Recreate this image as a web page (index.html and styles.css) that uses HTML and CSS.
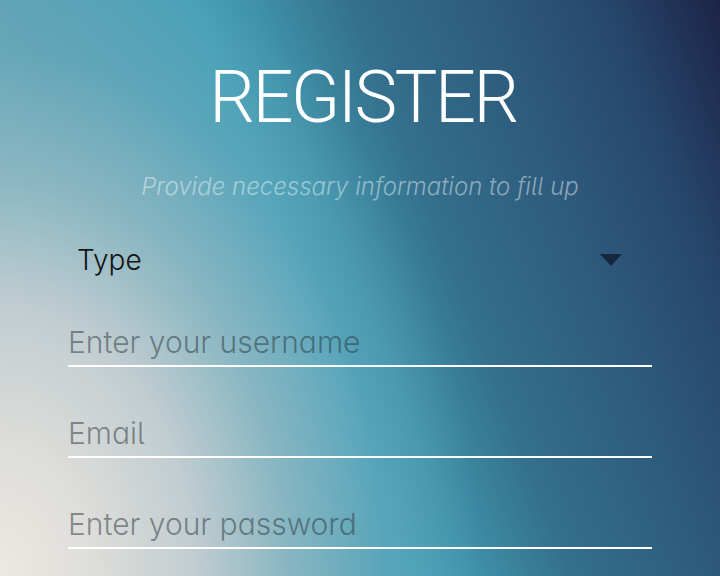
FILE: index.html
```html
<!DOCTYPE html>
<html lang="en">
<head>
<meta charset="utf-8">
<title>Register</title>
<link rel="stylesheet" href="styles.css">
</head>
<body>
<main class="screen">
  <h1 class="title">REGISTER</h1>
  <p class="subtitle">Provide necessary information to fill up</p>
  <form class="form">
    <div class="select">
      <span class="select-label">Type</span>
      <svg class="caret" width="22" height="12" viewBox="0 0 22 12" aria-hidden="true"><path d="M0 0 H22 L11 12 Z"/></svg>
    </div>
    <input class="field field-first" type="text" placeholder="Enter your username">
    <input class="field" type="email" placeholder="Email">
    <input class="field" type="password" placeholder="Enter your password">
  </form>
</main>
</body>
</html>
```
FILE: styles.css
```css
html, body {
  margin: 0;
  padding: 0;
}
body {
  width: 720px;
  height: 576px;
  overflow: hidden;
  font-family: "Inter", "Noto Sans", sans-serif;
  font-feature-settings: "cv11" 1, "cv05" 1;
}
.screen {
  box-sizing: border-box;
  width: 720px;
  height: 576px;
  padding: 0 68px;
  display: flex;
  flex-direction: column;
  background:
    radial-gradient(ellipse 480px 660px at 0 576px,
      rgb(237,233,227) 0%,
      rgb(221,221,217) 20%,
      rgb(194,205,209) 40%,
      rgba(150,188,198,0.78) 60%,
      rgba(120,176,192,0.32) 80%,
      rgba(100,170,190,0) 100%),
    linear-gradient(69deg,
      #78b2c0 0%,
      #5aa0b2 25%,
      #46a0b8 44%,
      #3f93ab 50%,
      #346f8c 61%,
      #2d5a7c 76%,
      #27466b 88%,
      #1b2446 100%);
}
.title {
  margin: 58px 0 0;
  padding-left: 6px;
  font-family: "Roboto", sans-serif;
  font-weight: 300;
  font-size: 72px;
  line-height: 80px;
  color: #ffffff;
  text-align: center;
  letter-spacing: -2.5px;
}
.subtitle {
  margin: 34px 0 0;
  font-size: 24px;
  font-weight: 300;
  font-style: italic;
  line-height: 30px;
  color: rgba(255,255,255,0.45);
  text-align: center;
}
.form {
  display: flex;
  flex-direction: column;
  margin-top: 38px;
}
.select {
  display: flex;
  align-items: center;
  justify-content: space-between;
  height: 40px;
  padding: 0 30px 0 9px;
}
.select-label {
  font-size: 28px;
  font-weight: 300;
  color: #141414;
}
.caret {
  fill: #18273c;
}
.field {
  box-sizing: border-box;
  width: 100%;
  height: 60px;
  margin-top: 31px;
  padding: 12px 0 0;
  border: 0;
  border-bottom: 2px solid #ffffff;
  background: transparent;
  font-family: inherit;
  font-feature-settings: "cv11" 1, "cv05" 1;
  font-size: 30px;
  font-weight: 300;
  color: #333;
  outline: none;
}
.field-first {
  margin-top: 27px;
}
.field::placeholder {
  color: rgba(40,52,58,0.52);
}
```
